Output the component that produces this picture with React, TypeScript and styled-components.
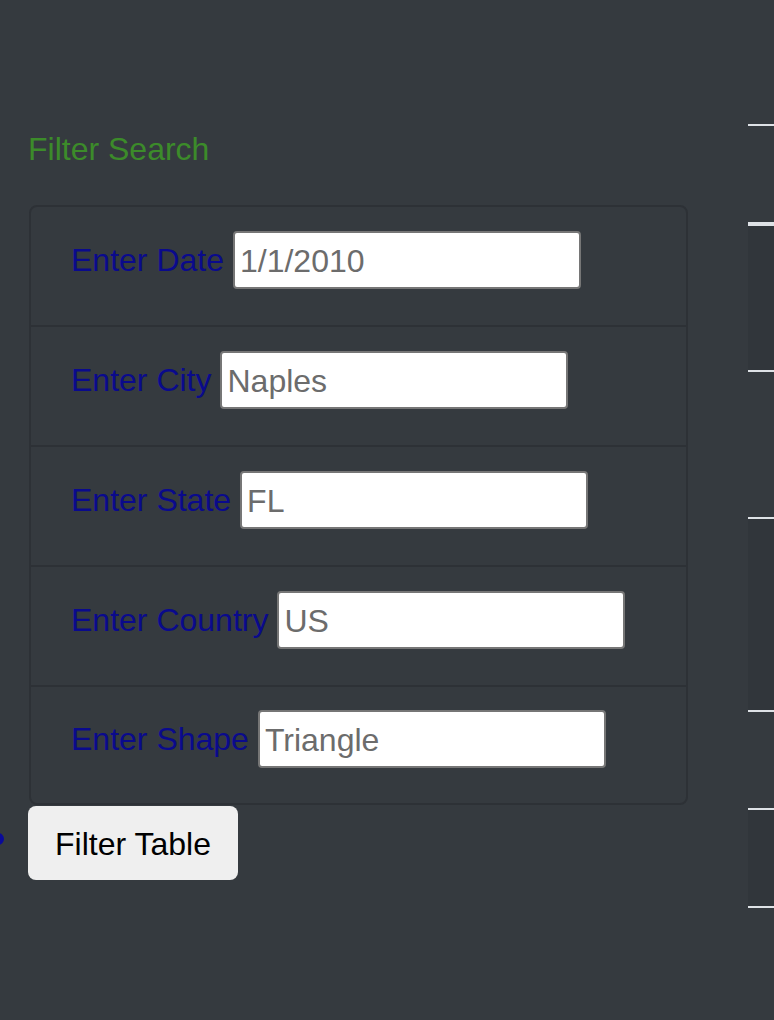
import React from "react";
import styled, { createGlobalStyle } from "styled-components";

const GlobalStyle = createGlobalStyle`
  html, body {
    margin: 0;
    padding: 0;
    background: #353a3f;
    overflow: hidden;
    font-family: "Liberation Sans", Arial, sans-serif;
  }
  * { box-sizing: border-box; }
`;

const Page = styled.div`
  display: flex;
  align-items: flex-start;
  padding-left: 28px;
  width: 774px;
  height: 1020px;
  overflow: hidden;
`;

const LeftColumn = styled.div`
  width: 660px;
  flex-shrink: 0;
  display: flex;
  flex-direction: column;
  padding-top: 130px;
`;

const Title = styled.h3`
  margin: 0;
  font-size: 32px;
  line-height: 38px;
  font-weight: 400;
  color: #3c8b2a;
`;

const List = styled.ul`
  list-style: none;
  margin: 37px 0 0 1px;
  padding: 0;
  border: 2px solid #2d3136;
  border-radius: 8px;
`;

const Row = styled.li`
  height: 120px;
  display: flex;
  align-items: center;
  padding: 0 40px 12px;
  & + & {
    border-top: 2px solid #2d3136;
  }
  &:first-child,
  &:last-child {
    height: 118px;
  }
`;

const Label = styled.label`
  font-size: 32px;
  color: #0a0a8c;
  margin-right: 9px;
  white-space: nowrap;
`;

const Input = styled.input`
  width: 348px;
  height: 58px;
  border: 2px solid #767676;
  border-radius: 4px;
  padding: 2px 5px 0;
  font-family: "Liberation Sans", Arial, sans-serif;
  font-size: 32px;
  color: #6c6c6c;
  background: #fff;
  outline: none;
  &::placeholder {
    color: #6c6c6c;
  }
`;

const ButtonRow = styled.div`
  display: flex;
  align-items: center;
  margin-top: 1px;
`;

const Bullet = styled.span`
  width: 12px;
  height: 12px;
  border-radius: 50%;
  background: #0a0a9a;
  margin-left: -36px;
  margin-right: 24px;
  margin-top: -8px;
`;

const Button = styled.button`
  width: 210px;
  height: 74px;
  border: none;
  border-radius: 8px;
  background: #efefef;
  color: #000;
  font-family: "Liberation Sans", Arial, sans-serif;
  font-size: 32px;
  padding: 2px 0 0;
`;

const Table = styled.div`
  margin-left: 60px;
  margin-top: 124px;
  width: 420px;
  flex-shrink: 0;
  display: flex;
  flex-direction: column;
  border-top: 2px solid #dee2e6;
`;

const HeadRow = styled.div`
  height: 100px;
  border-bottom: 4px solid #dee2e6;
`;

const BodyRow = styled.div<{ $h: number; $striped: boolean }>`
  height: ${(p) => p.$h}px;
  background: ${(p) => (p.$striped ? "rgba(0,0,0,0.06)" : "transparent")};
  padding: 26px 0 0 24px;
  font-size: 32px;
  line-height: 38px;
  color: #7d8288;
  & + & {
    border-top: 2px solid #dee2e6;
  }
`;

const fields = [
  { label: "Enter Date", value: "1/1/2010" },
  { label: "Enter City", value: "Naples" },
  { label: "Enter State", value: "FL" },
  { label: "Enter Country", value: "US" },
  { label: "Enter Shape", value: "Triangle" },
];

const rows = [
  { h: 144, text: "1/1/2010" },
  { h: 147, text: "1/1/2010" },
  { h: 193, text: "1/1/2010" },
  { h: 98, text: "1/1/2010" },
  { h: 98, text: "1/1/2010" },
  { h: 98, text: "" },
];

export default function App() {
  return (
    <>
      <GlobalStyle />
      <Page>
        <LeftColumn>
          <Title>Filter Search</Title>
          <List>
            {fields.map((f) => (
              <Row key={f.label}>
                <Label>{f.label}</Label>
                <Input type="text" placeholder={f.value} />
              </Row>
            ))}
          </List>
          <ButtonRow>
            <Bullet />
            <Button>Filter Table</Button>
          </ButtonRow>
        </LeftColumn>
        <Table>
          <HeadRow />
          {rows.map((r, i) => (
            <BodyRow key={i} $h={r.h} $striped={i % 2 === 0 && i < 5}>
              {r.text}
            </BodyRow>
          ))}
        </Table>
      </Page>
    </>
  );
}
